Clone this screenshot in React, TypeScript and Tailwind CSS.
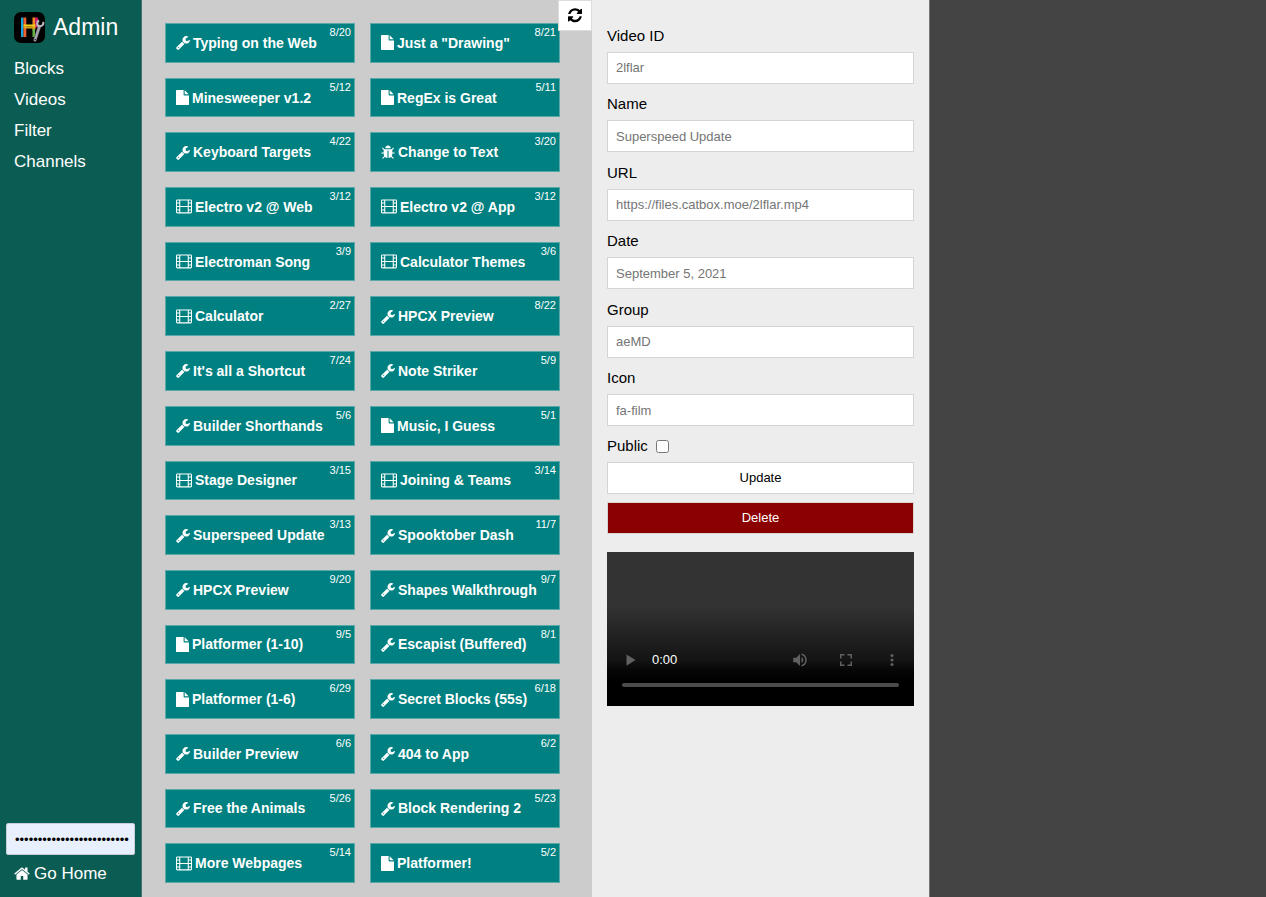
import React from "react";

const ICONS = {
  wrench: {
    box: "64 0 1664 1792",
    width: "w-[14px]",
    d: "M448 1472q0-26-19-45t-45-19-45 19-19 45 19 45 45 19 45-19 19-45zm644-420l-682 682q-37 37-90 37-52 0-91-37l-106-108q-38-36-38-90 0-53 38-91l681-681q39 98 114.500 173.500t173.500 114.500zm634-435q0 39-23 106-47 134-164.500 217.500t-258.500 83.500q-185 0-316.500-131.500t-131.500-316.500 131.500-316.500 316.500-131.500q58 0 121.500 16.500t107.500 46.500q16 11 16 28t-16 28l-293 169v224l193 107q5-3 79-48.500t135.500-81 70.500-35.500q15 0 23.500 10t8.500 25z",
  },
  file: {
    box: "128 0 1536 1792",
    width: "w-[13px]",
    d: "M1152 512v-472q22 14 36 28l408 408q14 14 28 36h-472zm-128 32q0 40 28 68t68 28h544v1056q0 40-28 68t-68 28h-1344q-40 0-68-28t-28-68v-1600q0-40 28-68t68-28h800v544z",
  },
  bug: {
    box: "64 0 1664 1792",
    width: "w-[14px]",
    d: "M1696 960q0 26-19 45t-45 19h-224q0 171-67 290l208 209q19 19 19 45t-19 45q-18 19-45 19t-45-19l-198-197q-5 5-15 13t-42 28.500-65 36.500-82 29-97 13v-896h-128v896q-51 0-101.500-13.500t-87-33-66-39-43.500-32.500l-15-14-183 207q-20 21-48 21-24 0-43-16-19-18-20.500-44.500t15.500-46.500l202-227q-58-114-58-274h-224q-26 0-45-19t-19-45 19-45 45-19h224v-294l-173-173q-19-19-19-45t19-45 45-19 45 19l173 173h844l173-173q19-19 45-19t45 19 19 45-19 45l-173 173v294h224q26 0 45 19t19 45zm-480-576h-640q0-133 93.500-226.500t226.500-93.500 226.500 93.500 93.500 226.500z",
  },
  film: {
    box: "0 0 1920 1792",
    width: "w-4",
    d: "M160 64H1760Q1920 64 1920 224V1568Q1920 1728 1760 1728H160Q0 1728 0 1568V224Q0 64 160 64ZM128 192V416H384V192ZM128 544V832H384V544ZM128 960V1248H384V960ZM128 1376V1600H384V1376ZM512 192V832H1408V192ZM512 960V1600H1408V960ZM1536 192V416H1792V192ZM1536 544V832H1792V544ZM1536 960V1248H1792V960ZM1536 1376V1600H1792V1376Z",
  },
  home: {
    box: "64 0 1664 1792",
    width: "w-4",
    d: "M1472 992v480q0 26-19 45t-45 19h-384v-384h-256v384h-384q-26 0-45-19t-19-45v-480q0-1 .5-3t.5-3l575-474 575 474q1 2 1 6zm223-69l-62 74q-8 9-21 11h-3q-13 0-21-7l-692-577-692 577q-12 8-24 7-13-2-21-11l-62-74q-8-10-7-23.500t11-21.500l719-599q32-26 76-26t76 26l244 204v-195q0-14 9-23t23-9h192q14 0 23 9t9 23v408l219 182q10 8 11 21.500t-7 23.500z",
  },
  refresh: {
    box: "128 0 1536 1792",
    width: "w-[14px]",
    d: "M1639 1056q0 5-1 7-64 268-268 434.500t-478 166.500q-146 0-282.500-55t-243.500-157l-129 129q-19 19-45 19t-45-19-19-45v-448q0-26 19-45t45-19h448q26 0 45 19t19 45-19 45l-137 137q71 66 161 102t187 36q134 0 250-65t186-179q11-17 53-117 8-23 30-23h192q13 0 22.500 9.500t9.500 22.500zm25-800v448q0 26-19 45t-45 19h-448q-26 0-45-19t-19-45 19-45l138-138q-148-137-349-137-134 0-250 65t-186 179q-11 17-53 117-8 23-30 23h-199q-13 0-22.500-9.500t-9.500-22.500v-7q65-268 270-434.500t480-166.500q146 0 284 55.500t245 156.500l130-129q19-19 45-19t45 19 19 45z",
  },
};

type IconName = keyof typeof ICONS;

function Icon({ name }: { name: IconName }) {
  const icon = ICONS[name];
  return (
    <svg viewBox={icon.box} className={`${icon.width} shrink-0`} fill="currentColor" fillRule="evenodd" aria-hidden="true">
      <path d={icon.d} />
    </svg>
  );
}

const videos: [IconName, string, string][] = [
  ["wrench", "Typing on the Web", "8/20"],
  ["file", 'Just a "Drawing"', "8/21"],
  ["file", "Minesweeper v1.2", "5/12"],
  ["file", "RegEx is Great", "5/11"],
  ["wrench", "Keyboard Targets", "4/22"],
  ["bug", "Change to Text", "3/20"],
  ["film", "Electro v2 @ Web", "3/12"],
  ["film", "Electro v2 @ App", "3/12"],
  ["film", "Electroman Song", "3/9"],
  ["film", "Calculator Themes", "3/6"],
  ["film", "Calculator", "2/27"],
  ["wrench", "HPCX Preview", "8/22"],
  ["wrench", "It's all a Shortcut", "7/24"],
  ["wrench", "Note Striker", "5/9"],
  ["wrench", "Builder Shorthands", "5/6"],
  ["file", "Music, I Guess", "5/1"],
  ["film", "Stage Designer", "3/15"],
  ["film", "Joining & Teams", "3/14"],
  ["wrench", "Superspeed Update", "3/13"],
  ["wrench", "Spooktober Dash", "11/7"],
  ["wrench", "HPCX Preview", "9/20"],
  ["wrench", "Shapes Walkthrough", "9/7"],
  ["file", "Platformer (1-10)", "9/5"],
  ["wrench", "Escapist (Buffered)", "8/1"],
  ["file", "Platformer (1-6)", "6/29"],
  ["wrench", "Secret Blocks (55s)", "6/18"],
  ["wrench", "Builder Preview", "6/6"],
  ["wrench", "404 to App", "6/2"],
  ["wrench", "Free the Animals", "5/26"],
  ["wrench", "Block Rendering 2", "5/23"],
  ["film", "More Webpages", "5/14"],
  ["file", "Platformer!", "5/2"],
];

const fields = [
  { id: "video-id", label: "Video ID", value: "2lflar" },
  { id: "name", label: "Name", value: "Superspeed Update" },
  { id: "url", label: "URL", value: "https://files.catbox.moe/2lflar.mp4" },
  { id: "date", label: "Date", value: "September 5, 2021" },
  { id: "group", label: "Group", value: "aeMD" },
  { id: "icon", label: "Icon", value: "fa-film" },
];

function Logo() {
  return (
    <svg viewBox="0 0 31 31" className="size-[31px]" aria-hidden="true">
      <rect width="31" height="31" rx="7" fill="#000" />
      <rect x="7" y="5.500" width="2.500" height="19.500" fill="#16a5dc" />
      <rect x="9.500" y="5.500" width="2.800" height="19.500" fill="#f0602a" />
      <rect x="18.500" y="5.500" width="2.700" height="13" fill="#f58a1f" />
      <rect x="21.200" y="5.500" width="2.600" height="10" fill="#e5177b" />
      <rect x="18.500" y="17" width="2.500" height="8" fill="#62b545" />
      <rect x="9.500" y="12.500" width="12" height="2" fill="#f6d21c" />
      <rect x="9.500" y="14.500" width="12" height="2" fill="#d9a51a" />
      <path d="M21 28L25.300 15" stroke="#44444c" strokeWidth="3.600" strokeLinecap="round" />
      <path d="M21 28L25.300 15" stroke="#a3a3ad" strokeWidth="2.400" strokeLinecap="round" />
      <path d="M25 8.500C22.400 10 22.800 14 25.600 14.200C28.400 14.400 30 12 29 10" fill="none" stroke="#b4b4bd" strokeWidth="2.200" />
      <circle cx="21.200" cy="27.500" r=".7" fill="#222" />
    </svg>
  );
}

function Sidebar() {
  return (
    <aside className="flex w-[142px] shrink-0 flex-col border-r border-[#46736f] bg-[#0b5c52] text-white">
      <h1 className="flex items-center gap-2 px-[14px] pt-[11px] text-[23px] leading-8">
        <Logo />
        Admin
      </h1>
      <nav className="flex flex-col pt-[10px] text-[17px] leading-[31px]">
        {["Blocks", "Videos", "Filter", "Channels"].map((item) => (
          <a key={item} href="#" className="px-[14px]">{item}</a>
        ))}
      </nav>
      <div className="mt-auto flex flex-col px-[6px] pb-2">
        <input
          type="password"
          aria-label="Password"
          defaultValue="abcdefghijklmnopqrstuvwxy"
          className="h-8 w-full rounded-xs border border-[#c5ced6] bg-[#e8f0fe] pr-1 pl-2 text-[13px] text-black"
        />
        <a href="#" className="mt-1 flex items-center gap-1 px-2 text-[17px] leading-[30px]">
          <Icon name="home" />
          Go Home
        </a>
      </div>
    </aside>
  );
}

function VideoList() {
  return (
    <main className="relative grid w-[450px] shrink-0 auto-rows-fr grid-cols-2 gap-[15px] bg-[#ccc] pt-[23px] pr-8 pb-[14px] pl-[23px]">
      {videos.map(([icon, title, date], i) => (
        <button
          key={i}
          type="button"
          className="relative flex min-w-0 items-center gap-[3px] border border-[#5aa9a9] bg-[#008080] px-[10px] text-left text-[14px] leading-5 font-bold whitespace-nowrap text-white"
        >
          <Icon name={icon} />
          {title}
          <span className="absolute top-0 right-[3px] text-[11px] leading-4 font-normal">{date}</span>
        </button>
      ))}
      <button
        type="button"
        aria-label="Refresh"
        className="absolute top-0 right-0 flex h-[31px] w-[34px] items-center justify-center border border-[#ddd] bg-white text-black"
      >
        <Icon name="refresh" />
      </button>
    </main>
  );
}

function Player() {
  return (
    <section
      aria-label="Video player"
      className="mt-[18px] flex h-[154px] flex-col justify-end bg-linear-to-b from-[#333] from-35% via-[#141414] via-70% to-black to-90% px-[15px] pb-[19px] text-[#616161]"
    >
      <div className="flex items-center">
        <button type="button" aria-label="Play">
          <svg viewBox="0 0 24 24" className="size-[18px]" fill="currentColor"><path d="M6 4.500v15l12-7.500z" /></svg>
        </button>
        <span className="ml-3 text-[13px] leading-[18px] text-white">0:00</span>
        <div className="-mr-0.5 ml-auto flex gap-7">
          <button type="button" aria-label="Mute">
            <svg viewBox="0 0 24 24" className="size-[18px]" fill="currentColor">
              <path d="M3 9v6h4l5 5V4L7 9H3zm13.500 3A4.500 4.500 0 0 0 14 7.970v8.050A4.500 4.500 0 0 0 16.500 12zM14 3.230v2.060A7 7 0 0 1 14 18.700v2.060A9 9 0 0 0 14 3.230z" />
            </svg>
          </button>
          <button type="button" aria-label="Full screen">
            <svg viewBox="0 0 24 24" className="size-[18px]" fill="none" stroke="currentColor" strokeWidth="2">
              <path d="M10 5H5v5M14 5h5v5M10 19H5v-5M14 19h5v-5" />
            </svg>
          </button>
          <button type="button" aria-label="More options">
            <svg viewBox="0 0 24 24" className="size-[18px]" fill="currentColor">
              <circle cx="12" cy="6" r="2" /><circle cx="12" cy="12" r="2" /><circle cx="12" cy="18" r="2" />
            </svg>
          </button>
        </div>
      </div>
      <div className="mt-[14px] h-1 rounded-full bg-[#4c4c4c]" />
    </section>
  );
}

function Editor() {
  return (
    <form className="flex w-[338px] shrink-0 flex-col border-r border-[#777] bg-[#ededed] px-[15px] pt-[15px] text-black" onSubmit={(e) => e.preventDefault()}>
      <div className="grid h-[411px] auto-rows-fr">
        {fields.map((f) => (
          <div key={f.id} className="flex flex-col justify-end">
            <label htmlFor={f.id} className="mb-1 text-[15px] leading-6">{f.label}</label>
            <input
              id={f.id}
              placeholder={f.value}
              className="h-8 w-full border border-[#d5d5d5] bg-white px-2 text-[13px] placeholder:text-[#757575]"
            />
          </div>
        ))}
      </div>
      <div className="flex h-9 items-center gap-2 pt-1">
        <label htmlFor="public" className="text-[15px] leading-6">Public</label>
        <input id="public" type="checkbox" className="size-[13px]" />
      </div>
      <button type="submit" className="h-8 border border-[#d5d5d5] bg-white text-[13px]">Update</button>
      <button type="button" className="mt-2 h-8 border border-[#d5d5d5] bg-[#8b0000] text-[13px] text-white">Delete</button>
      <Player />
    </form>
  );
}

export default function App() {
  return (
    <div className="flex min-h-screen bg-[#444] font-['Liberation_Sans',Arial,sans-serif]">
      <Sidebar />
      <VideoList />
      <Editor />
    </div>
  );
}
